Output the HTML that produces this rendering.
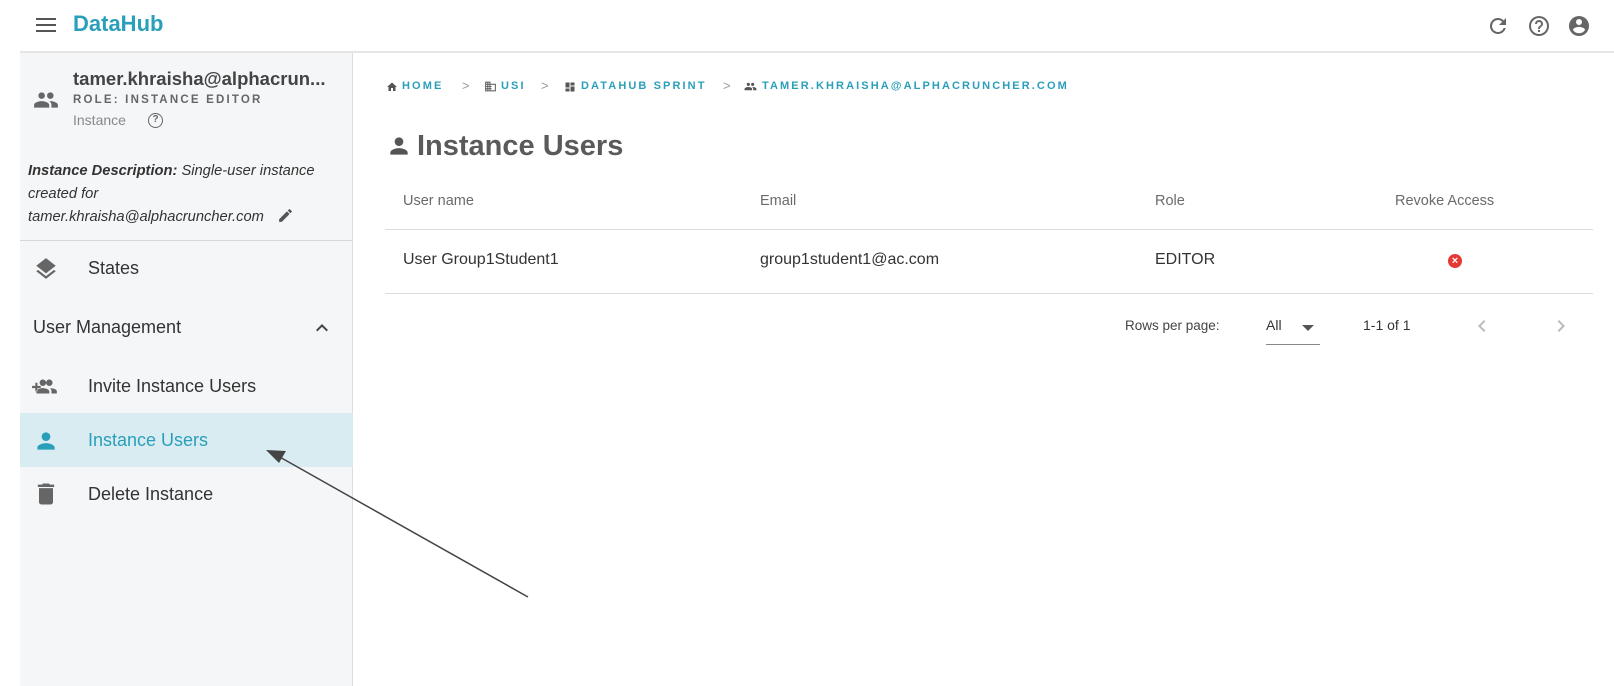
<!DOCTYPE html>
<html><head><meta charset="utf-8"><style>
*{margin:0;padding:0;box-sizing:border-box}
body{width:1614px;height:686px;overflow:hidden;background:#fff;font-family:"Liberation Sans",sans-serif;color:#333;position:relative}
.a{position:absolute;white-space:nowrap}
.side{position:absolute;left:20px;top:53px;width:333px;height:633px;background:#f5f6f8;border-right:1px solid #ddd}
.bc{font-size:11px;font-weight:bold;letter-spacing:2.1px;color:#2a9fba}
.gt{color:#999;font-size:13px}
.th{font-size:14.5px;color:#6a6a6a}
.td{font-size:16px;color:#333}
svg{display:block}
</style></head><body>
<div class="a" style="left:36px;top:18px;width:20px;height:2px;background:#555;box-shadow:0 6px 0 #555,0 12px 0 #555"></div>
<div class="a" style="left:73px;top:11px;font-size:22px;font-weight:bold;color:#2a9fba">DataHub</div>
<svg class="a" style="left:1486px;top:14px" width="24" height="24" viewBox="0 0 24 24"><path fill="#666" d="M17.65 6.35A7.96 7.96 0 0 0 12 4a8 8 0 1 0 7.73 10h-2.08A6 6 0 1 1 12 6c1.66 0 3.14.69 4.22 1.78L13 11h7V4l-2.35 2.35z"/></svg>
<svg class="a" style="left:1527px;top:14px" width="24" height="24" viewBox="0 0 24 24"><path fill="#666" d="M11 18h2v-2h-2v2zm1-16a10 10 0 1 0 0 20 10 10 0 0 0 0-20zm0 18a8 8 0 1 1 0-16 8 8 0 0 1 0 16zm0-14a4 4 0 0 0-4 4h2a2 2 0 1 1 4 0c0 2-3 1.75-3 5h2c0-2.250 3-2.5 3-5a4 4 0 0 0-4-4z"/></svg>
<svg class="a" style="left:1567px;top:14px" width="24" height="24" viewBox="0 0 24 24"><path fill="#666" d="M12 2a10 10 0 1 0 0 20 10 10 0 0 0 0-20zm0 3a3 3 0 1 1 0 6 3 3 0 0 1 0-6zm0 14.2a7.2 7.2 0 0 1-6-3.220c.03-1.990 4-3.080 6-3.080s5.970 1.090 6 3.080a7.2 7.2 0 0 1-6 3.220z"/></svg>
<div class="a" style="left:20px;top:51px;width:1594px;height:2px;background:#e6e6e6"></div>

<div class="side"></div>
<svg class="a" style="left:33px;top:87px" width="26" height="26" viewBox="0 0 24 24"><path fill="#666" d="M16 11c1.66 0 2.99-1.34 2.99-3S17.66 5 16 5s-3 1.34-3 3 1.34 3 3 3zm-8 0c1.66 0 2.99-1.34 2.99-3S9.66 5 8 5 5 6.34 5 8s1.34 3 3 3zm0 2c-2.33 0-7 1.17-7 3.5V19h14v-2.5C15 14.17 10.33 13 8 13zm8 0c-.29 0-.62.02-.97.05 1.16.84 1.970 1.970 1.970 3.450V19h6v-2.5c0-2.330-4.670-3.500-7-3.500z"/></svg>
<div class="a" style="left:73px;top:68px;font-size:18.5px;font-weight:bold;color:#444">tamer.khraisha@alphacrun...</div>
<div class="a" style="left:73px;top:94px;font-size:11.5px;font-weight:bold;letter-spacing:2.2px;color:#666">ROLE: INSTANCE EDITOR</div>
<div class="a" style="left:73px;top:112px;font-size:14px;color:#888">Instance</div>
<div class="a" style="left:148px;top:113px;width:15px;height:15px;border:1.5px solid #666;border-radius:50%;font-size:10px;font-weight:bold;text-align:center;line-height:12px;color:#666">?</div>
<div class="a" style="left:28px;top:160px;font-size:14.7px;font-style:italic;line-height:23px;color:#333"><b>Instance Description:</b> Single-user instance<br>created for<br>tamer.khraisha@alphacruncher.com</div>
<svg class="a" style="left:277px;top:207px" width="17" height="17" viewBox="0 0 24 24"><path fill="#555" d="M3 17.25V21h3.75L17.81 9.94l-3.75-3.75L3 17.25zM20.71 7.04a1 1 0 0 0 0-1.41l-2.34-2.34a1 1 0 0 0-1.41 0l-1.83 1.83 3.75 3.75 1.83-1.83z"/></svg>
<div class="a" style="left:20px;top:240px;width:333px;height:1px;background:#d8d8d8"></div>
<svg class="a" style="left:33px;top:256px" width="26" height="26" viewBox="0 0 24 24"><path fill="#666" d="M11.99 18.54l-7.37-5.73L3 14.07l9 7 9-7-1.63-1.27-7.38 5.74zM12 16l7.36-5.73L21 9l-9-7-9 7 1.63 1.27L12 16z"/></svg>
<div class="a" style="left:88px;top:258px;font-size:18px">States</div>
<div class="a" style="left:33px;top:317px;font-size:18px">User Management</div>
<svg class="a" style="left:310px;top:316px" width="24" height="24" viewBox="0 0 24 24"><path fill="#444" d="M7.41 15.41L12 10.83l4.59 4.58L18 14l-6-6-6 6z"/></svg>
<svg class="a" style="left:31px;top:374px" width="28" height="26" viewBox="0 0 26 24"><path fill="#666" d="M1 11h3V8h2v3h3v2H6v3H4v-3H1zM17 11c1.66 0 3-1.34 3-3s-1.34-3-3-3-3 1.34-3 3 1.34 3 3 3zm-6 0c1.66 0 3-1.34 3-3S12.66 5 11 5 8 6.34 8 8s1.34 3 3 3zm0 2c-2 0-6 1-6 3v2h12v-2c0-2-4-3-6-3zm6.6.1c.9.7 1.4 1.6 1.4 2.9v2h5v-2c0-2-3.8-2.8-6.4-2.9z"/></svg>
<div class="a" style="left:88px;top:376px;font-size:18px">Invite Instance Users</div>
<div class="a" style="left:20px;top:413px;width:333px;height:54px;background:#d9ecf2"></div>
<svg class="a" style="left:33px;top:428px" width="26" height="26" viewBox="0 0 24 24"><path fill="#2a9fba" d="M12 12c2.21 0 4-1.79 4-4s-1.79-4-4-4-4 1.79-4 4 1.79 4 4 4zm0 2c-2.67 0-8 1.34-8 4v2h16v-2c0-2.66-5.33-4-8-4z"/></svg>
<div class="a" style="left:88px;top:430px;font-size:18px;color:#2a9fba">Instance Users</div>
<svg class="a" style="left:32px;top:480px" width="28" height="28" viewBox="0 0 24 24"><path fill="#666" d="M6 19c0 1.1.9 2 2 2h8c1.1 0 2-.9 2-2V7H6v12zM19 4h-3.5l-1-1h-5l-1 1H5v2h14V4z"/></svg>
<div class="a" style="left:88px;top:484px;font-size:18px">Delete Instance</div>

<svg class="a" style="left:0;top:0" width="1614" height="686"><line x1="528" y1="597" x2="278" y2="456" stroke="#444" stroke-width="1.5"/><polygon points="266,450 286,451 279,463" fill="#444"/></svg>

<svg class="a" style="left:386px;top:81px" width="12" height="12" viewBox="0 0 24 24"><path fill="#555" d="M10 20v-6h4v6h5v-8h3L12 3 2 12h3v8z"/></svg>
<div class="a bc" style="left:402px;top:80px">HOME</div>
<div class="a gt" style="left:462px;top:78px">&gt;</div>
<svg class="a" style="left:484px;top:80px" width="13" height="13" viewBox="0 0 24 24"><path fill="#666" d="M12 7V3H2v18h20V7H12zM6 19H4v-2h2v2zm0-4H4v-2h2v2zm0-4H4V9h2v2zm0-4H4V5h2v2zm4 12H8v-2h2v2zm0-4H8v-2h2v2zm0-4H8V9h2v2zm0-4H8V5h2v2zm10 12h-8v-2h2v-2h-2v-2h2v-2h-2V9h8v10z"/></svg>
<div class="a bc" style="left:501px;top:80px">USI</div>
<div class="a gt" style="left:541px;top:78px">&gt;</div>
<svg class="a" style="left:564px;top:81px" width="12" height="12" viewBox="0 0 24 24"><path fill="#555" d="M3 13h8V3H3v10zm0 8h8v-6H3v6zm10 0h8V11h-8v10zm0-18v6h8V3h-8z"/></svg>
<div class="a bc" style="left:581px;top:80px">DATAHUB SPRINT</div>
<div class="a gt" style="left:723px;top:78px">&gt;</div>
<svg class="a" style="left:744px;top:80px" width="13" height="13" viewBox="0 0 24 24"><path fill="#555" d="M16 11c1.66 0 2.99-1.34 2.99-3S17.66 5 16 5s-3 1.34-3 3 1.34 3 3 3zm-8 0c1.66 0 2.99-1.34 2.99-3S9.66 5 8 5 5 6.34 5 8s1.34 3 3 3zm0 2c-2.33 0-7 1.17-7 3.5V19h14v-2.5C15 14.17 10.33 13 8 13zm8 0c-.29 0-.62.02-.97.05 1.16.84 1.97 1.97 1.97 3.45V19h6v-2.5c0-2.33-4.67-3.5-7-3.5z"/></svg>
<div class="a bc" style="left:762px;top:80px">TAMER.KHRAISHA@ALPHACRUNCHER.COM</div>

<svg class="a" style="left:386px;top:133px" width="26" height="26" viewBox="0 0 24 24"><path fill="#555" d="M12 12c2.21 0 4-1.79 4-4s-1.79-4-4-4-4 1.79-4 4 1.79 4 4 4zm0 2c-2.67 0-8 1.34-8 4v2h16v-2c0-2.66-5.33-4-8-4z"/></svg>
<div class="a" style="left:417px;top:130px;font-size:29px;font-weight:bold;color:#5a5a5a">Instance Users</div>

<div class="a th" style="left:403px;top:193px">User name</div>
<div class="a th" style="left:760px;top:193px">Email</div>
<div class="a th" style="left:1155px;top:193px">Role</div>
<div class="a th" style="left:1395px;top:193px">Revoke Access</div>
<div class="a" style="left:385px;top:229px;width:1208px;height:1px;background:#ddd"></div>
<div class="a td" style="left:403px;top:251px">User Group1Student1</div>
<div class="a td" style="left:760px;top:251px">group1student1@ac.com</div>
<div class="a td" style="left:1155px;top:251px">EDITOR</div>
<div class="a" style="left:1448px;top:254px;width:14px;height:14px;border-radius:50%;background:#e53935;color:#fff;font-size:11px;font-weight:bold;text-align:center;line-height:14px">×</div>
<div class="a" style="left:385px;top:293px;width:1208px;height:1px;background:#ddd"></div>

<div class="a" style="left:1125px;top:318px;font-size:13.5px;color:#444">Rows per page:</div>
<div class="a" style="left:1266px;top:317px;font-size:14px;color:#333">All</div>
<div class="a" style="left:1302px;top:325px;width:0;height:0;border-left:6px solid transparent;border-right:6px solid transparent;border-top:6px solid #555"></div>
<div class="a" style="left:1266px;top:344px;width:54px;height:1px;background:#888"></div>
<div class="a" style="left:1363px;top:317px;font-size:14px;color:#333">1-1 of 1</div>
<svg class="a" style="left:1470px;top:314px" width="24" height="24" viewBox="0 0 24 24"><path fill="#bbb" d="M15.41 7.41L14 6l-6 6 6 6 1.41-1.41L10.83 12z"/></svg>
<svg class="a" style="left:1549px;top:314px" width="24" height="24" viewBox="0 0 24 24"><path fill="#bbb" d="M8.59 16.59L10 18l6-6-6-6-1.41 1.41L13.17 12z"/></svg>
</body></html>
